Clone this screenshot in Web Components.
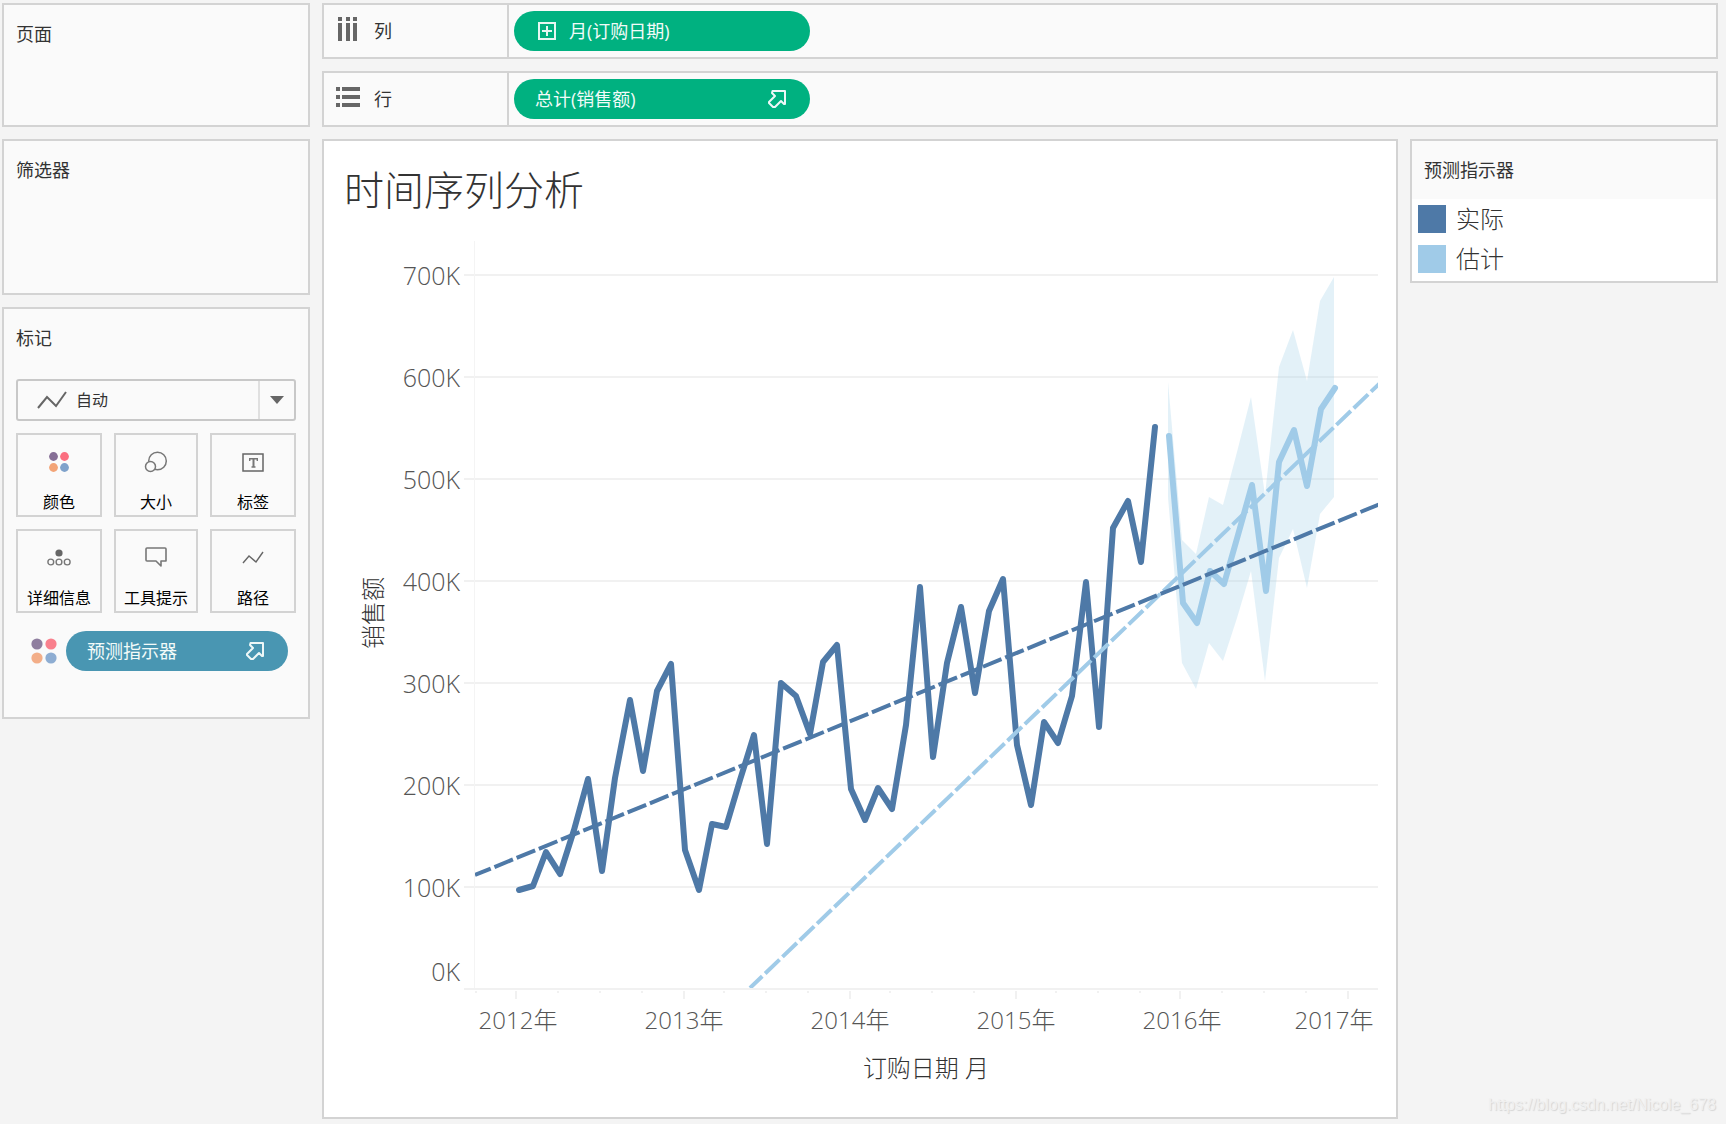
<!DOCTYPE html>
<html lang="zh-CN">
<head>
<meta charset="utf-8">
<title>时间序列分析</title>
<style>
  html { height: 100%; }
  body {
    margin: 0; min-height: 100%; background: #f4f4f4; color: #333;
    font-family: "Open Sans", "Noto Sans CJK SC", sans-serif; font-size: 18px; line-height: 24px;
    --line: #d3d3d3; --panel: #fafafa; --green: #00b180; --teal: #4996b2;
    --actual: #4e79a7; --estimate: #a0cbe8;
  }
</style>
</head>
<body>
<viz-workbook></viz-workbook>

<script>
const define = (name, html, setup) => customElements.define(name, class extends HTMLElement {
  constructor() {
    super();
    const t = document.createElement('template');
    t.innerHTML = '<style>*{box-sizing:border-box}:host{box-sizing:border-box}</style>' + html;
    this.attachShadow({ mode: 'open' }).append(t.content.cloneNode(true));
  }
  connectedCallback() { if (setup && !this.ready) { this.ready = true; setup(this, this.shadowRoot); } }
});

/* ---- icons ---- */
const ICONS = {
  columns: [24, '<path fill="#666" d="M2 0h4v4H2zM10 0h4v4h-4zM17 0h4v4h-4zM2 6h4v18H2zM10 6h4v18h-4zM17 6h4v18h-4z"/>'],
  rows: [24, '<path fill="#666" d="M0 2h4v4H0zM0 10h4v4H0zM0 18h4v4H0zM6 2h18v4H6zM6 10h18v4H6zM6 18h18v4H6z"/>'],
  plus: [18, '<path fill="none" stroke="#e6f7f2" stroke-width="2" d="M1 1h16v16H1zM9 4v10M4 9h10"/>'],
  forecast: [18, '<path fill="none" stroke="#edf7f7" stroke-width="2" stroke-linejoin="round" d="M4.500 1H17v13l-1 0-3-3-6 6H5l-4-4v-1l6-6-3-3z"/>'],
  trend: [28, '<path fill="none" stroke="#666" stroke-width="2" d="M0 22 9 11 18 20 28 6"/>'],
  path: [24, '<path fill="none" stroke="#666" stroke-width="1.4" d="M2 17 8 10 15 16 22 6"/>'],
  color: [24, '<circle cx="6.5" cy="6.5" r="4.4" fill="#866f96"/><circle cx="17.5" cy="6.5" r="4.4" fill="#fb6f80"/><circle cx="6.5" cy="17.5" r="4.4" fill="#f3a477"/><circle cx="17.5" cy="17.5" r="4.4" fill="#7fa2cb"/>'],
  dots: [28, '<circle cx="7" cy="7" r="5.6" fill="#8f7e9f"/><circle cx="21" cy="7" r="5.6" fill="#f9808d"/><circle cx="7" cy="21" r="5.6" fill="#f3ae88"/><circle cx="21" cy="21" r="5.6" fill="#8eadd2"/>'],
  size: [24, '<g fill="#fafafa" stroke="#777" stroke-width="1.5"><circle cx="13.5" cy="11" r="8.8"/><circle cx="6.5" cy="16.5" r="5"/></g>'],
  label: [24, '<path fill="none" stroke="#666" stroke-width="1.5" d="M2 4h20v17H2z"/><path fill="none" stroke="#777" stroke-width="1.4" d="M8.700 11V8.700h7.600V11M10.500 17h4"/><path stroke="#777" stroke-width="2" d="M12.500 8v9"/>'],
  detail: [24, '<circle cx="12" cy="7" r="3.6" fill="#666"/><g fill="none" stroke="#777" stroke-width="1.4"><circle cx="3.8" cy="16" r="2.9"/><circle cx="12" cy="16" r="2.9"/><circle cx="20.2" cy="16" r="2.9"/></g>'],
  tooltip: [24, '<path fill="none" stroke="#777" stroke-width="1.6" stroke-linejoin="round" d="M3 2h18q1 0 1 1v12h-5v5l-5-5H3q-1 0-1-1V3q0-1 1-1z"/>']
};
define('viz-icon', '<style>:host{display:block;flex:none}svg{display:block;overflow:visible}</style>', (el, root) => {
  const [s, body] = ICONS[el.getAttribute('name')];
  root.innerHTML += `<svg width="${s}" height="${s}" viewBox="0 0 ${s} ${s}" aria-hidden="true">${body}</svg>`;
});

/* ---- titled panel ---- */
define('viz-card', `
<style>
  :host { display: flex; flex-direction: column; border: 2px solid var(--line); background: var(--panel); }
  h2 { margin: 0; padding: 17px 12px; font-size: 18px; line-height: 24px; font-weight: 400; }
</style>
<h2><slot name="title"></slot></h2>
<slot></slot>`);

/* ---- field pill ---- */
define('viz-pill', `
<style>
  :host { display: flex; --bg: var(--green); }
  :host([tone="teal"]) { --bg: var(--teal); }
  button {
    flex: 1; min-width: 0; height: 40px; padding: 0 24px 0 21px; border: 0; border-radius: 20px;
    display: flex; align-items: center; background: var(--bg); color: #f2fbf9;
    font: inherit; line-height: 24px; text-align: left;
  }
  span { flex: 1; white-space: nowrap; }
  slot[name="before"]::slotted(*) { margin: 0 13px 0 3px; }
</style>
<button type="button"><slot name="before"></slot><span><slot></slot></span><slot name="after"></slot></button>`);

/* ---- columns / rows shelf ---- */
define('viz-shelf', `
<style>
  :host { display: flex; height: 56px; border: 2px solid var(--line); background: var(--panel); }
  .name { width: 185px; padding: 0 12px; display: flex; align-items: center; gap: 14px; border-right: 2px solid var(--line); flex: none; }
  slot[name="icon"]::slotted(*) { padding-bottom: 4px; }
  .drop { flex: 1; padding: 6px 5px; }
  ::slotted(viz-pill) { width: 296px; }
</style>
<div class="name"><slot name="icon"></slot><slot name="name"></slot></div>
<div class="drop"><slot></slot></div>`);

/* ---- marks card ---- */
define('mark-button', `
<style>
  :host { display: flex; }
  button {
    flex: 1; height: 84px; padding: 15px 0 0; border: 2px solid var(--line); background: var(--panel);
    display: flex; flex-direction: column; align-items: center; gap: 16px;
    font: inherit; font-size: 16px; line-height: 24px; color: #000; white-space: nowrap;
  }
</style>
<button type="button"><slot name="icon"></slot><span><slot></slot></span></button>`);

define('mark-type', `
<style>
  :host { display: grid; align-items: center; border: 2px solid #c8c8c8; border-radius: 3px; }
  select, viz-icon, .arrow { grid-area: 1 / 1; }
  select {
    width: 100%; height: 38px; padding: 0 40px 0 58px; border: 0; appearance: none; background: transparent;
    font: inherit; font-size: 16px; line-height: 24px; color: #333;
  }
  viz-icon { margin-left: 20px; pointer-events: none; }
  .arrow { justify-self: end; width: 36px; height: 38px; border-left: 2px solid #e0e0e0; display: grid; place-items: center; pointer-events: none; }
</style>
<select aria-label="标记类型"><option>自动</option></select>
<viz-icon name="trend"></viz-icon>
<div class="arrow"><svg width="14" height="8" viewBox="0 0 14 8"><path fill="#666" d="M0 0h14L7 8z"/></svg></div>`);

define('viz-marks', `
<style>
  :host { display: block; }
  viz-card { height: 412px; }
  .body { padding: 12px; display: flex; flex-direction: column; gap: 12px; }
  .grid { display: grid; grid-template-columns: 86fr 84fr 86fr; gap: 12px; }
  .field { display: flex; align-items: center; gap: 8px; padding: 6px 8px 0 14px; }
  viz-pill { flex: 1; }
</style>
<viz-card><span slot="title">标记</span>
  <div class="body">
    <mark-type></mark-type>
    <div class="grid">
      <mark-button><viz-icon slot="icon" name="color"></viz-icon>颜色</mark-button>
      <mark-button><viz-icon slot="icon" name="size"></viz-icon>大小</mark-button>
      <mark-button><viz-icon slot="icon" name="label"></viz-icon>标签</mark-button>
      <mark-button><viz-icon slot="icon" name="detail"></viz-icon>详细信息</mark-button>
      <mark-button><viz-icon slot="icon" name="tooltip"></viz-icon>工具提示</mark-button>
      <mark-button><viz-icon slot="icon" name="path"></viz-icon>路径</mark-button>
    </div>
    <div class="field">
      <viz-icon name="dots"></viz-icon>
      <viz-pill tone="teal">预测指示器<viz-icon slot="after" name="forecast"></viz-icon></viz-pill>
    </div>
  </div>
</viz-card>`);

/* ---- legend ---- */
define('legend-item', `
<style>
  :host { display: flex; align-items: center; gap: 10px; height: 40px; padding: 0 6px; font-size: 24px; line-height: 32px; font-weight: 300; }
  i { width: 28px; height: 28px; background: var(--swatch); }
</style><i></i><slot></slot>`);
define('viz-legend', `
<style>
  :host { display: block; }
  div { background: #fff; padding-bottom: 2px; }
</style>
<viz-card><span slot="title">预测指示器</span>
  <div>
    <legend-item style="--swatch: var(--actual)">实际</legend-item>
    <legend-item style="--swatch: var(--estimate)">估计</legend-item>
  </div>
</viz-card>`);

/* ---- chart ---- */
const ACTUAL = '519,890 533,886 546,852 560,874 574,830 588,779 602,871 615,778 630,700 643,771 657,691 671,664 685,850 699,890 712,824 726,827 740,780 754,735 767,844 781,683 796,696 810,734 823,662 837,645 851,789 865,820 878,788 892,809 906,725 920,587 933,757 947,663 961,607 975,693 989,611 1003,579 1017,745 1031,805 1044,722 1058,743 1072,696 1086,582 1099,727 1113,528 1128,501 1141,562 1155,427';
const ESTIMATE = '1169,436 1183,603 1197,623 1210,571 1224,584 1238,535 1252,485 1266,591 1279,462 1294,430 1307,486 1321,409 1335,388';
const BAND = '1168,382 1182,540 1196,554 1209,497 1223,505 1237,452 1251,397 1265,495 1279,367 1293,330 1307,381 1320,301 1334,277 1334,497 1320,514 1307,588 1293,529 1279,558 1265,681 1251,571 1237,618 1223,661 1209,643 1196,689 1182,663 1168,497';
define('viz-chart', `
<style>
  :host { display: block; border: 2px solid var(--line); background: #fff; }
  h1 { margin: 0; padding: 25px 20px 13px; font-size: 40px; line-height: 48px; font-weight: 300; }
  svg { display: block; width: 100%; height: auto; font-size: 24px; font-weight: 300; }
  .tick { fill: #555; }
  .value { font-size: 25px; text-anchor: end; }
  .axis { fill: #333; text-anchor: middle; }
</style>
<h1>时间序列分析</h1>
<svg viewBox="324 227 1072 890" role="img" aria-label="销售额"></svg>`, (el, root) => {
  let s = '';
  for (let i = 0; i < 8; i++) {
    const y = 989 - i * 102;
    s += `<path stroke="#f1f1f1" stroke-width="2" d="M464 ${y}H1378"/>`;
    s += `<text class="tick value" x="460" y="${i ? y + 10 : 981}">${i}${i ? '00' : ''}K</text>`;
  }
  s += '<path stroke="#f4f4f4" d="M474.5 241V988"/>';
  const minor = [476, 558, 600, 642, 724, 766, 808, 890, 932, 974, 1056, 1098, 1140, 1222, 1264, 1306];
  const major = [516, 684, 850, 1016, 1180, 1348];
  s += `<path stroke="#f1f1f1" stroke-width="2" d="${minor.map(x => `M${x} 991v2`).join('')}${major.map(x => `M${x} 991v8`).join('')}"/>`;
  [518, 684, 850, 1016, 1182, 1334].forEach((x, i) => { s += `<text class="tick" text-anchor="middle" x="${x}" y="1029">${2012 + i}年</text>`; });
  s += '<text class="axis" x="926" y="1077">订购日期 月</text><text class="axis" transform="translate(382 613) rotate(-90)">销售额</text>';
  const line = 'fill="none" stroke-width="6" stroke-linecap="round" stroke-linejoin="round"';
  const dash = 'stroke-width="4" stroke-dasharray="20 4" stroke-dashoffset="3"';
  s += '<clipPath id="plot"><path d="M475 241H1378V988H475z"/></clipPath><g clip-path="url(#plot)">';
  s += `<polygon fill="#a2cfe7" fill-opacity=".3" points="${BAND}"/>`;
  s += `<polyline ${line} stroke="#4e79a7" points="${ACTUAL}"/>`;
  s += `<path ${dash} stroke="#a0cbe8" d="M750 988 1380 383"/>`;
  s += `<polyline ${line} stroke="#a0cbe8" points="${ESTIMATE}"/>`;
  s += `<path ${dash} stroke="#4e79a7" d="M475 875 1380 504"/></g>`;
  root.querySelector('svg').innerHTML = s;
});

/* ---- page ---- */
define('viz-workbook', `
<style>
  :host { display: grid; grid-template-columns: 308px minmax(0, 1fr); gap: 12px; align-items: start; padding: 3px 8px 5px 2px; }
  aside, main, .shelves { display: flex; flex-direction: column; gap: 12px; }
  .view { display: grid; grid-template-columns: minmax(0, 1fr) 308px; gap: 12px; }
  .side { display: flex; flex-direction: column; justify-content: space-between; }
  .pages { height: 124px; }
  .filters { height: 156px; }
  .mark { font: 16px/24px "Liberation Sans", sans-serif; color: #f0f0f0; text-shadow: 1px 1px 1px #d4d4d4; text-align: right; padding: 0 2px 2px 0; }
</style>
<aside>
  <viz-card class="pages"><span slot="title">页面</span></viz-card>
  <viz-card class="filters"><span slot="title">筛选器</span></viz-card>
  <viz-marks></viz-marks>
</aside>
<main>
  <div class="shelves">
    <viz-shelf><viz-icon slot="icon" name="columns"></viz-icon><span slot="name">列</span>
      <viz-pill><viz-icon slot="before" name="plus"></viz-icon>月(订购日期)</viz-pill></viz-shelf>
    <viz-shelf><viz-icon slot="icon" name="rows"></viz-icon><span slot="name">行</span>
      <viz-pill>总计(销售额)<viz-icon slot="after" name="forecast"></viz-icon></viz-pill></viz-shelf>
  </div>
  <div class="view">
    <viz-chart></viz-chart>
    <div class="side"><viz-legend></viz-legend><div class="mark">https://blog.csdn.net/Nicole_678</div></div>
  </div>
</main>`);
</script>
</body>
</html>
